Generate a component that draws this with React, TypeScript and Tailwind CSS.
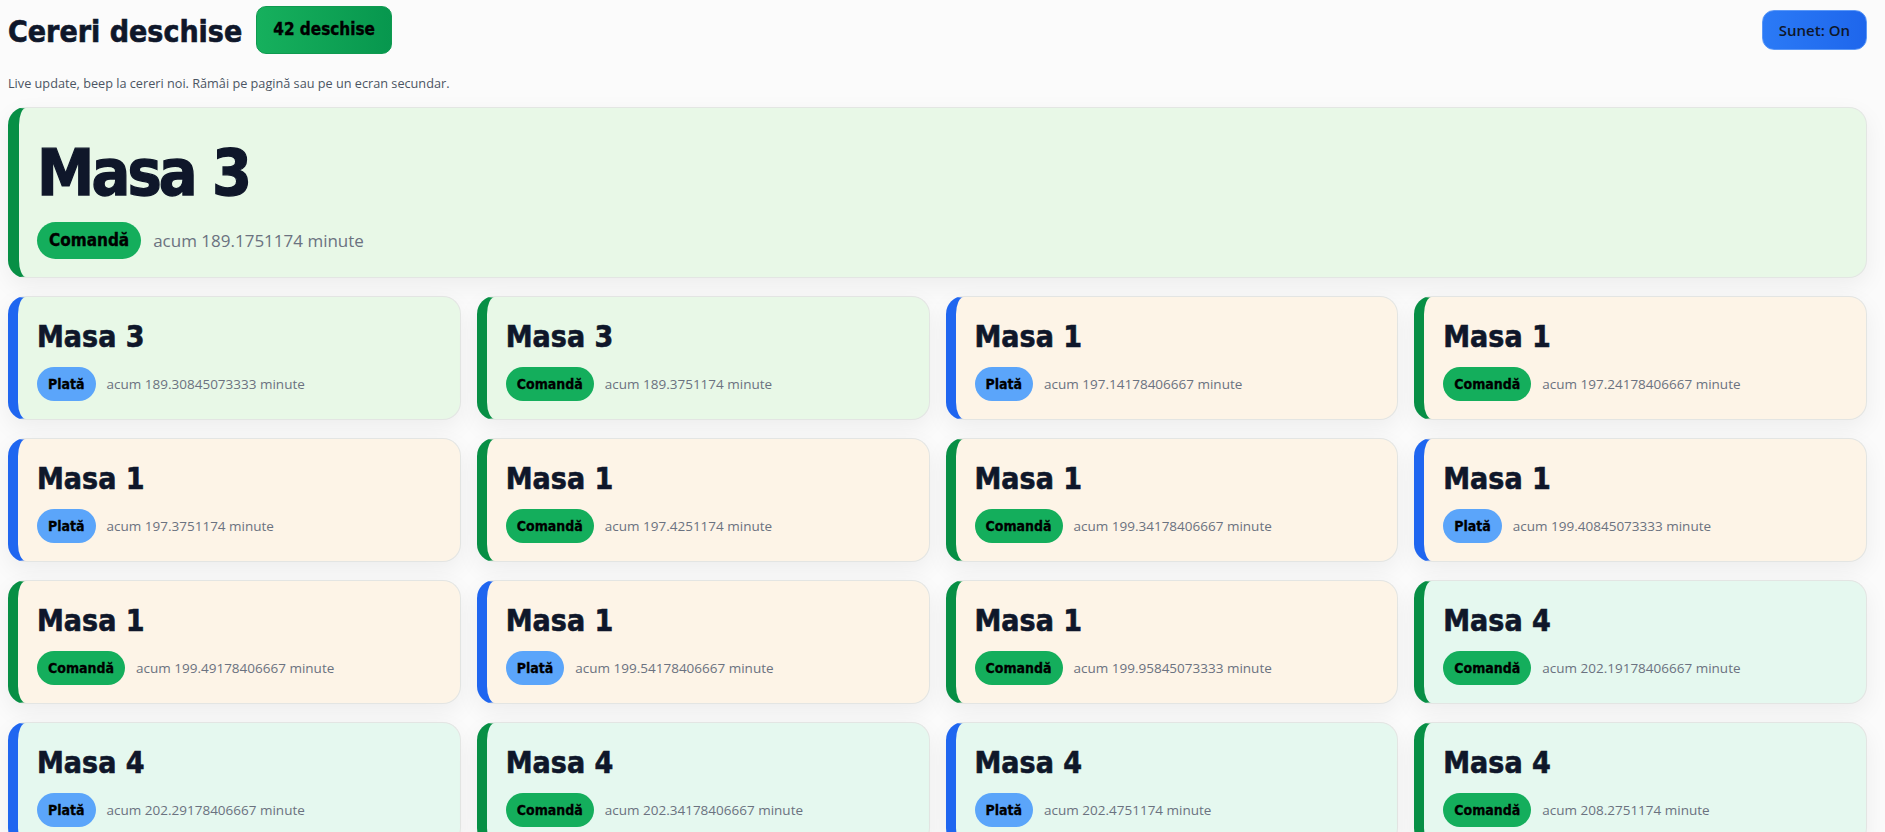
import React from 'react';

type Kind = 'plata' | 'comanda';
type Tint = 'green' | 'orange' | 'mint';

interface Cerere {
  masa: number;
  kind: Kind;
  minute: string;
  tint: Tint;
}

const cereri: Cerere[] = [
  { masa: 3, kind: 'plata', minute: '189.30845073333', tint: 'green' },
  { masa: 3, kind: 'comanda', minute: '189.3751174', tint: 'green' },
  { masa: 1, kind: 'plata', minute: '197.14178406667', tint: 'orange' },
  { masa: 1, kind: 'comanda', minute: '197.24178406667', tint: 'orange' },
  { masa: 1, kind: 'plata', minute: '197.3751174', tint: 'orange' },
  { masa: 1, kind: 'comanda', minute: '197.4251174', tint: 'orange' },
  { masa: 1, kind: 'comanda', minute: '199.34178406667', tint: 'orange' },
  { masa: 1, kind: 'plata', minute: '199.40845073333', tint: 'orange' },
  { masa: 1, kind: 'comanda', minute: '199.49178406667', tint: 'orange' },
  { masa: 1, kind: 'plata', minute: '199.54178406667', tint: 'orange' },
  { masa: 1, kind: 'comanda', minute: '199.95845073333', tint: 'orange' },
  { masa: 4, kind: 'comanda', minute: '202.19178406667', tint: 'mint' },
  { masa: 4, kind: 'plata', minute: '202.29178406667', tint: 'mint' },
  { masa: 4, kind: 'comanda', minute: '202.34178406667', tint: 'mint' },
  { masa: 4, kind: 'plata', minute: '202.4751174', tint: 'mint' },
  { masa: 4, kind: 'comanda', minute: '208.2751174', tint: 'mint' },
];

const tintBg: Record<Tint, string> = {
  green: 'bg-[#e8f8e7]',
  orange: 'bg-[#fdf4e7]',
  mint: 'bg-[#e5f8ef]',
};

const edge: Record<Kind, string> = {
  plata: 'border-l-[#1f66f0]',
  comanda: 'border-l-[#078f45]',
};

// condensed DejaVu bold + a hairline stroke gets close to the heavy Tahoma look
const heading =
  "font-['DejaVu_Sans_Condensed','DejaVu_Sans',sans-serif] font-bold text-[#0f172a] [-webkit-text-stroke:0.02em_currentColor]";
const body = "font-['Open_Sans','Noto_Sans',sans-serif]";

const Badge: React.FC<{ kind: Kind; big?: boolean }> = ({ kind, big }) => (
  <span
    className={`${heading} inline-flex items-center rounded-full text-black ${
      kind === 'plata' ? 'bg-[#5ba5fa]' : 'bg-[#14ae5c]'
    } ${big ? 'h-[37px] px-3 text-[17px]' : 'h-[34px] px-[11px] text-[14px]'}`}
  >
    {kind === 'plata' ? 'Plată' : 'Comandă'}
  </span>
);

const App: React.FC = () => {
  return (
    <div className="min-h-screen bg-[#fbfbfb] pl-2 pr-[18px] pt-1.5 pb-6">
      <div className="flex h-12 items-center justify-between">
        <div className="flex items-center gap-3.5">
          <h1 className={`${heading} pt-1 text-[30px] leading-9`}>Cereri deschise</h1>
          <span
            className={`${heading} flex h-12 items-center rounded-[10px] border border-[#0f9a50] bg-linear-to-r from-[#16b05d] to-[#07974e] px-4 text-[17px] text-black`}
          >
            42 deschise
          </span>
        </div>
        <button
          className={`${body} h-10 rounded-xl border border-[#5b98f7] bg-linear-to-r from-[#2b7af6] to-[#1e66ec] px-4 text-[15px] font-semibold text-[#0f172a]`}
        >
          Sunet: On
        </button>
      </div>

      <p className={`${body} mt-[21px] text-[12.7px] leading-4 text-[#4b5563]`}>
        Live update, beep la cereri noi. Rămâi pe pagină sau pe un ecran secundar.
      </p>

      <div className="mt-4 h-[171px] rounded-[18px] border border-[#e3e6e3] border-l-[11px] border-l-[#078f45] bg-[#e8f8e7] pl-[18px] pt-[33px] shadow-[0_8px_24px_rgba(0,0,0,0.06)]">
        <div className={`${heading} text-[64px] leading-none tracking-[-0.045em]`}>Masa 3</div>
        <div className="mt-[17px] flex items-center gap-3">
          <Badge kind="comanda" big />
          <span className={`${body} text-[17px] text-[#6b7280]`}>acum 189.1751174 minute</span>
        </div>
      </div>

      <div className="mt-[18px] grid grid-cols-4 gap-x-4 gap-y-[18px]">
        {cereri.map((c, i) => (
          <div
            key={i}
            className={`h-[124px] rounded-[18px] border border-[#e3e5e3] border-l-[10px] ${edge[c.kind]} ${tintBg[c.tint]} pl-[19px] pt-[22px] shadow-[0_8px_24px_rgba(0,0,0,0.06)]`}
          >
            <div className={`${heading} text-[30px] leading-9`}>Masa {c.masa}</div>
            <div className="mt-3 flex items-center gap-[11px]">
              <Badge kind={c.kind} />
              <span className={`${body} text-[13.5px] text-[#6b7280]`}>acum {c.minute} minute</span>
            </div>
          </div>
        ))}
      </div>
    </div>
  );
};

export default App;
